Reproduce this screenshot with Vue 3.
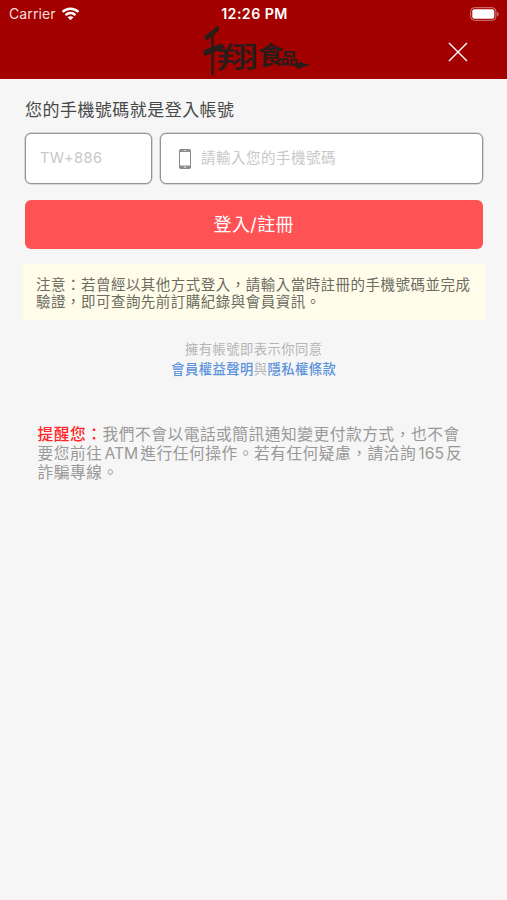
<script setup>
import { ref } from "vue";

const countryCode = ref("");
const phone = ref("");
</script>

<template>
  <div class="page">
    <header class="header">
      <div class="status-bar">
        <div class="status-bar__carrier">
          <span>Carrier</span>
          <svg class="status-bar__wifi" viewBox="0 0 20 15">
            <g fill="none" stroke="#fff" stroke-width="2.7">
              <path d="M1.5 5.3C6.3.6 13.7.6 18.500 5.300" />
              <path d="M4.7 8.7c3-2.9 7.6-2.9 10.6 0" />
            </g>
            <path d="M10 14.3 6.8 11.1c1.8-1.7 4.6-1.7 6.4 0z" fill="#fff" />
          </svg>
        </div>
        <div class="status-bar__time">12:26 PM</div>
        <svg class="status-bar__battery" viewBox="0 0 30 14">
          <rect
            x="0.7"
            y="0.7"
            width="25.2"
            height="12.6"
            rx="3.6"
            fill="none"
            stroke="#d47f7f"
            stroke-width="1"
          />
          <rect x="2.3" y="2.3" width="22" height="9.4" rx="2" fill="#fff" />
          <path d="M27.2 4.7c1.9.8 1.9 3.8 0 4.6z" fill="#d47f7f" />
        </svg>
      </div>

      <div class="nav">
        <svg class="nav__logo" viewBox="0 0 112 54">
          <g class="nav__logo-text">
            <text transform="translate(4.5 49) scale(0.7 1.9) skewY(-8)">千</text>
            <text
              class="nav__logo-wide"
              transform="translate(18.5 43.500) scale(1.55 1.08) skewY(-3)"
            >
              翔
            </text>
            <text transform="translate(60 40.500) scale(0.95 0.94) skewY(-4)">食</text>
            <text transform="translate(82 39) scale(0.68 0.62) skewY(4)">品</text>
          </g>
          <path
            d="M94 39.500c3 .8 5-.5 7-2 2-1.200 3-.5 4 .5 2 .8 4 .8 7 2-3 1.500-6 1-8 2.500-2 1-3 2-5 1.500 0-1 1-1.500 1.500-2.500-2.500.5-5 0-6.500-2z"
            fill="#2a1c18"
          />
        </svg>
        <button class="nav__close" type="button" aria-label="關閉">
          <svg viewBox="0 0 20 20">
            <path
              d="M1 1l18 18M19 1 1 19"
              fill="none"
              stroke="#fff"
              stroke-width="1.4"
            />
          </svg>
        </button>
      </div>
    </header>

    <main class="content">
      <h1 class="title">您的手機號碼就是登入帳號</h1>

      <form class="form" @submit.prevent>
        <div class="form__row">
          <label class="field">
            <input v-model="countryCode" class="field__input" placeholder="TW+886" />
          </label>
          <label class="field field--phone">
            <svg class="field__icon" viewBox="0 0 12 20">
              <rect width="12" height="20" rx="1.8" fill="#8c8c8c" />
              <rect x="1" y="3" width="10" height="13.5" fill="#fff" />
              <rect x="4.5" y="1.2" width="3" height="0.8" fill="#ddd" />
              <rect x="4.8" y="17.5" width="2.4" height="1.2" fill="#ddd" />
            </svg>
            <input
              v-model="phone"
              class="field__input"
              type="tel"
              placeholder="請輸入您的手機號碼"
            />
          </label>
        </div>
        <button class="form__submit" type="submit">登入/註冊</button>
      </form>

      <p class="note">
        注意：若曾經以其他方式登入，請輸入當時註冊的手機號碼並完成<br />驗證，即可查詢先前訂購紀錄與會員資訊。
      </p>

      <p class="terms">
        擁有帳號即表示你同意<br /><a class="terms__link">會員權益聲明</a>與<a
          class="terms__link"
          >隱私權條款</a
        >
      </p>

      <p class="reminder">
        <strong class="reminder__label">提醒您：</strong>我們不會以電話或簡訊通知變更付款方式，也不會<br />要您前往<span
          class="reminder__latin"
          >ATM</span
        >進行任何操作。若有任何疑慮，請洽詢<span class="reminder__latin">165</span>反<br />詐騙專線。
      </p>
    </main>
  </div>
</template>

<style>
body {
  background: #f6f6f6;
}
</style>

<style scoped>
.page {
  min-height: 900px;
  background: #f6f6f6;
  font-family: Inter, "Noto Sans CJK TC", sans-serif;
}

.header {
  box-sizing: border-box;
  height: 79px;
  background: #a30000;
  color: #fff;
}

.status-bar {
  display: grid;
  grid-template-columns: 1fr auto 1fr;
  align-items: center;
  height: 27px;
  padding: 0 7px 0 9px;
}

.status-bar__carrier {
  display: flex;
  align-items: center;
  gap: 5px;
  font-size: 14px;
  letter-spacing: 0.1px;
  color: #f8dede;
}

.status-bar__wifi {
  width: 19px;
  height: 14px;
}

.status-bar__time {
  font-size: 14.2px;
  font-weight: 600;
  letter-spacing: 0.45px;
}

.status-bar__battery {
  justify-self: end;
  width: 30px;
  height: 14px;
}

.nav {
  display: grid;
  grid-template-columns: 1fr 112px 1fr;
  height: 52px;
}

.nav__logo {
  grid-column: 2;
  width: 112px;
  height: 54px;
  margin-top: -2px;
  overflow: visible;
}

.nav__logo-text {
  fill: #2a1c18;
  font-family: "Noto Sans CJK TC", sans-serif;
  font-size: 27px;
  font-weight: 700;
}

.nav__logo-wide {
  font-weight: 500;
}

.nav__close {
  justify-self: end;
  width: 20px;
  height: 20px;
  margin: 15px 39px 0 0;
  padding: 0;
  border: 0;
  background: none;
}

.nav__close svg {
  display: block;
  width: 20px;
  height: 20px;
}

.content {
  padding: 19px 24.5px 0 25px;
}

.title {
  margin: 0 0 11px;
  color: #484848;
  font-size: 17px;
  font-weight: 400;
  line-height: 24px;
  letter-spacing: 0.46px;
}

.form__row {
  display: grid;
  grid-template-columns: 127px 1fr;
  gap: 8px;
}

.field {
  box-sizing: border-box;
  display: flex;
  align-items: center;
  height: 51px;
  padding: 0 14px;
  border: 1px solid #949494;
  border-radius: 6px;
  background: #fff;
  box-shadow: 0 0 0 0.5px #b5b5b5;
}

.field--phone {
  gap: 10px;
  padding-left: 18px;
}

.field__icon {
  flex: none;
  width: 12px;
  height: 20px;
}

.field__input {
  flex: 1;
  min-width: 0;
  margin-top: -2px;
  padding: 0;
  border: 0;
  outline: 0;
  background: none;
  font: inherit;
  font-size: 14.5px;
  letter-spacing: 0.5px;
}

.field__input::placeholder {
  color: #c8c8c8;
}

.form__submit {
  display: block;
  width: 100%;
  height: 49px;
  margin-top: 16px;
  padding: 0 0 3px;
  border: 0;
  border-radius: 6px;
  background: #ff5254;
  color: #fff;
  font: inherit;
  font-size: 18px;
  letter-spacing: 0.4px;
}

.note {
  margin: 15px -2.5px 0 -3px;
  padding: 12px 0 10px 14px;
  background: #fffde9;
  color: #6b6b62;
  font-size: 14.5px;
  line-height: 17px;
  letter-spacing: 0.48px;
  white-space: nowrap;
}

.terms {
  margin: 19px 0 0;
  color: #b5b5b5;
  font-size: 13.3px;
  line-height: 20px;
  letter-spacing: 0.46px;
  text-align: center;
}

.terms__link {
  color: #5b92dd;
  font-weight: 500;
}

.reminder {
  margin: 46px 0 0 12.5px;
  color: #999;
  font-size: 15.7px;
  line-height: 19px;
  letter-spacing: 0.55px;
  white-space: nowrap;
}

.reminder__label {
  color: #ff2525;
  font-weight: 500;
}

.reminder__latin {
  margin: 0 2px;
  letter-spacing: 0;
}
</style>
